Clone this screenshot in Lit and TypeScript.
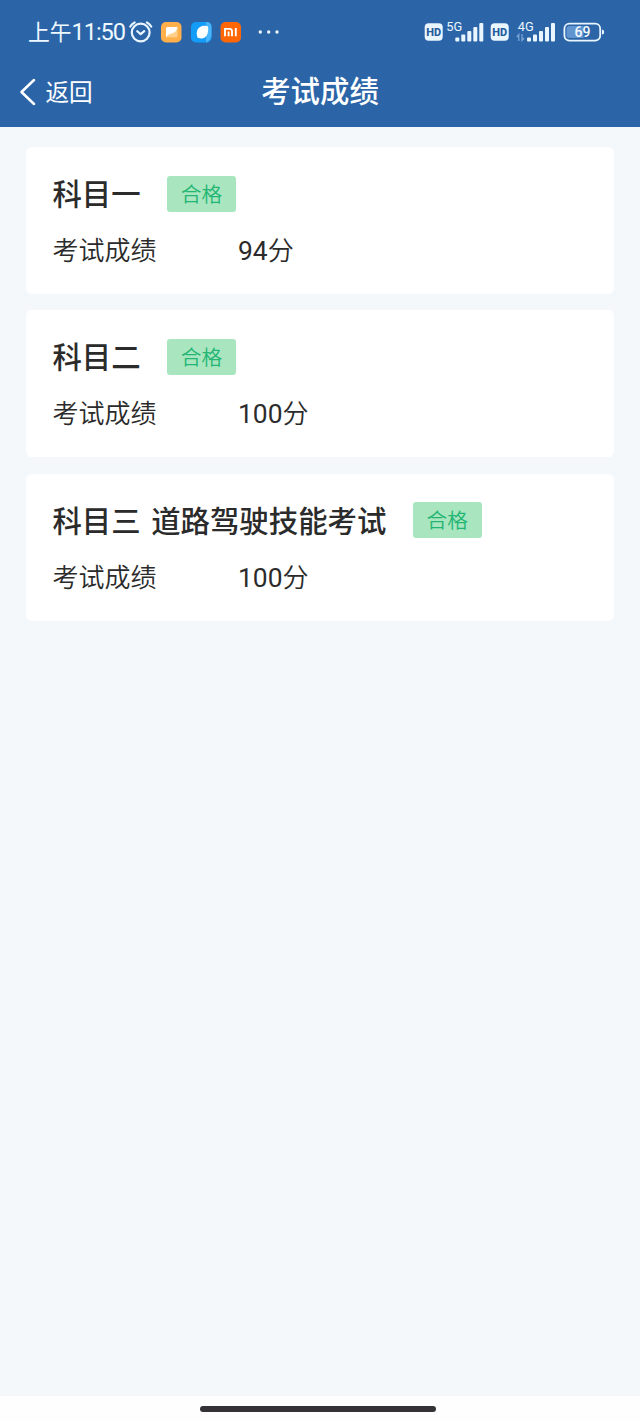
import { LitElement, html, svg, css } from "lit";
import { customElement, property } from "lit/decorators.js";

interface Result {
  subject: string;
  score: number;
}

const RESULTS: Result[] = [
  { subject: "科目一", score: 94 },
  { subject: "科目二", score: 100 },
  { subject: "科目三 道路驾驶技能考试", score: 100 },
];

const BAR_HEIGHTS = [4, 7, 10.5, 14.5, 18.5];

@customElement("status-bar")
export class StatusBar extends LitElement {
  static styles = css`
    :host {
      display: flex;
      align-items: center;
      height: 64px;
      padding-left: 28px;
      color: #eef8ff;
    }
    .time {
      display: flex;
      align-items: baseline;
      width: 101px;
      padding-bottom: 2px;
      font-size: 21.8px;
      font-weight: 400;
      line-height: 30px;
      white-space: nowrap;
    }
    .clock {
      font-family: Roboto, sans-serif;
      font-size: 23.6px;
      font-weight: 450;
      letter-spacing: -1.1px;
    }
    svg {
      display: block;
      flex: none;
    }
    .apps {
      margin-right: 140px;
    }
    text {
      font-family: Roboto, "Noto Sans", sans-serif;
    }
  `;

  render() {
    return html`
      <span class="time">上午<span class="clock">11:50</span></span>
      <svg class="apps" width="155" height="30" viewBox="129 17 155 30">
        <g fill="none" stroke="#eaf6ff" stroke-width="2.2" stroke-linecap="round" stroke-linejoin="round">
          <circle cx="140.7" cy="32.5" r="8.9" />
          <path d="M130.3 26.6Q131.8 23.8 134.6 22.4M151.2 26.6Q149.7 23.8 146.9 22.4M137.3 31.2l3.4 3 3.5-3" />
        </g>
        <rect x="161" y="22" width="20.5" height="20.5" rx="5" fill="#ffb04a" />
        <path d="M166 28.500q0-1.500 1.500-1.500h10v8.800q0 1.500-1.500 1.500h-10z" fill="#ffd08c" />
        <path d="M166 28.500q0-1.500 1.500-1.500h10q-1 5.500-6 6.500-3.500.5-5.500 3.800z" fill="#fff" />
        <rect x="191" y="22" width="20.5" height="20.5" rx="5" fill="#139df8" />
        <path d="M206 22h.5q5 0 5 5v9q-1 4-4.500 6.500h-1z" fill="#48b4fb" />
        <path d="M203 25.800q3.800-.4 4.700.4.900 1 .4 4.800-.8 7-6 7.400-1.500.2-4.500-.6-1-2.500-.9-5 .4-5.700 6.300-7z" fill="#fff" />
        <rect x="220.500" y="22" width="20.500" height="20.500" rx="5" fill="#ff6706" />
        <g fill="none" stroke="#fff" stroke-width="1.900">
          <path d="M225 36.200v-7.300h4.500q2.500 0 2.500 2.500v4.800M228.600 36.200v-4.700M235.800 27.900v8.300" />
        </g>
        <g fill="#eaf6ff">
          <circle cx="260.300" cy="32" r="1.700" />
          <circle cx="268.700" cy="32" r="1.700" />
          <circle cx="277" cy="32" r="1.700" />
        </g>
      </svg>
      <svg width="184" height="30" viewBox="424 17 184 30">
        ${this.hd(424.7)}
        <text x="446.300" y="31" font-size="12.800" font-weight="400" fill="#eaf6ff">5G</text>
        ${this.signal(455.3)}
        ${this.hd(490.7)}
        <text x="517.800" y="31" font-size="12.800" font-weight="400" fill="#eaf6ff">4G</text>
        <path d="M516.800 37l2-2.500v6.500M524 38l-2 2.500v-6.500" fill="none" stroke="#79a5d6" stroke-width="1.300" />
        ${this.signal(527)}
        <path d="M569 26h14.500v12h-14.500q-2.500 0-2.500-2.500v-7q0-2.500 2.500-2.500z" fill="#6295d0" />
        <rect x="564.400" y="23.700" width="35.800" height="16.900" rx="5" fill="none" stroke="#eaf6ff" stroke-width="1.800" />
        <path d="M602 29.500q2.200 0 2.200 2.500t-2.200 2.500z" fill="#eaf6ff" />
        <text x="582.500" y="37" text-anchor="middle" font-size="14" font-weight="500" fill="#f4fbff">69</text>
      </svg>
    `;
  }

  private hd(x: number) {
    return svg`
      <rect x=${x} y="23.3" width="18" height="17.4" rx="4" fill="#eaf6ff" />
      <text x=${x + 9} y="36" text-anchor="middle" font-size="11" font-weight="800" fill="#245b9b">HD</text>`;
  }

  private signal(x: number) {
    return BAR_HEIGHTS.map(
      (h, i) => svg`<rect x=${x + i * 6} y=${41.5 - h} width="4" height=${h} rx="1" fill="#eaf6ff"/>`
    );
  }
}

@customElement("nav-bar")
export class NavBar extends LitElement {
  static styles = css`
    :host {
      display: grid;
      grid-template-columns: 1fr auto 1fr;
      align-items: center;
      height: 63px;
      padding: 0 20px 8px;
      box-sizing: border-box;
      color: #fff;
    }
    .back {
      display: flex;
      align-items: center;
      gap: 9.5px;
      font-size: 23.6px;
      line-height: 34px;
    }
    .back span {
      padding-bottom: 2px;
    }
    .title {
      padding-bottom: 5px;
      font-size: 29.4px;
      font-weight: 500;
      line-height: 42px;
    }
  `;

  render() {
    return html`
      <div class="back">
        <svg width="16" height="28" viewBox="0 0 16 28" fill="none" stroke="#fff" stroke-width="2.5" stroke-linecap="round" stroke-linejoin="round">
          <path d="M14 2L1.500 14 14 26" />
        </svg>
        <span>返回</span>
      </div>
      <div class="title">考试成绩</div>
    `;
  }
}

@customElement("result-card")
export class ResultCard extends LitElement {
  @property() subject = "";
  @property({ type: Number }) score = 0;

  static styles = css`
    :host {
      display: block;
      height: 147px;
      padding: 28px 26.4px 0;
      box-sizing: border-box;
      border-radius: 6px;
      background: #fff;
      color: #2b2b2b;
    }
    .head {
      display: flex;
      align-items: center;
      gap: 26.4px;
      height: 37px;
    }
    .subject {
      padding-bottom: 3px;
      font-size: 29.4px;
      font-weight: 500;
      line-height: 34px;
      white-space: pre;
      word-spacing: 4px;
    }
    .badge {
      width: 69px;
      height: 36px;
      border-radius: 3px;
      background: #a9e6c0;
      color: #22b573;
      font-size: 20.7px;
      font-weight: 350;
      line-height: 34px;
      text-align: center;
    }
    .row {
      display: grid;
      grid-template-columns: 185.6px 1fr;
      align-items: baseline;
      margin-top: 18px;
      font-size: 26px;
      font-weight: 350;
      line-height: 38px;
    }
    .num {
      font-family: Roboto, sans-serif;
      font-size: 26.4px;
      font-weight: 380;
    }
  `;

  render() {
    return html`
      <div class="head">
        <span class="subject">${this.subject}</span>
        <span class="badge">合格</span>
      </div>
      <div class="row">
        <span>考试成绩</span><span><span class="num">${this.score}</span>分</span>
      </div>
    `;
  }
}

@customElement("app-root")
export class AppRoot extends LitElement {
  static styles = css`
    :host {
      display: flex;
      flex-direction: column;
      height: 1422px;
      background: #f4f8fa;
      font-family: "Noto Sans CJK SC", sans-serif;
    }
    header {
      height: 127px;
      background: #2b65a8;
    }
    main {
      flex: 1;
      display: flex;
      flex-direction: column;
      gap: 16.4px;
      padding: 20px 26px 0;
    }
    footer {
      display: flex;
      justify-content: center;
      height: 26px;
      padding: 10px 4px 0 0;
      box-sizing: border-box;
      background: #fefefe;
    }
    .handle {
      width: 236px;
      height: 6px;
      border-radius: 3px;
      background: #343236;
    }
  `;

  render() {
    return html`
      <header>
        <status-bar></status-bar>
        <nav-bar></nav-bar>
      </header>
      <main>
        ${RESULTS.map((r) => html`<result-card .subject=${r.subject} .score=${r.score}></result-card>`)}
      </main>
      <footer><div class="handle"></div></footer>
    `;
  }
}
